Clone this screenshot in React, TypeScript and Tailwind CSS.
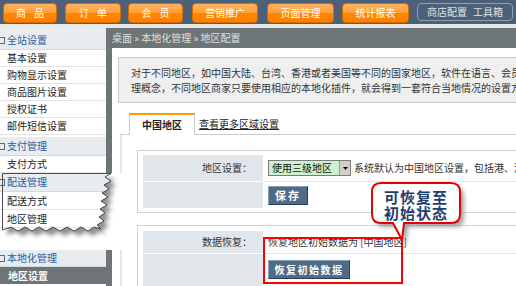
import React from "react";

const PAPER: [number, number][] = [
  [2.5, 0.5], [111, 0.5],
  [105, 4], [111, 8], [104, 12], [109, 16], [102, 20], [108, 24], [101, 28], [107, 32],
  [100, 36], [105, 40], [99, 44], [104, 48], [97, 52], [101, 56],
  [94, 54], [88, 58], [81, 54], [74, 58], [67, 54], [60, 58], [53, 54], [46, 58],
  [39, 54], [32, 58], [25, 54], [18, 58], [11, 54], [2.5, 57],
];
const paperD = "M" + PAPER.map(([x, y]) => `${x} ${y}`).join(" L") + " Z";
const outsideD = "M2 0 H124 V77 H2 Z " + paperD;

const CALLOUT_D =
  "M13 4 H83 Q92 4 92 13 V35 Q92 44 83 44 H36 L34 61 L25 44 H13 Q4 44 4 35 V13 Q4 4 13 4 Z";

function NavBtn({ label, cls, spaced }: { label: string; cls: string; spaced?: boolean }) {
  return (
    <div
      className={`h-[20px] rounded-[4px] border border-[#d96c00] bg-[linear-gradient(to_bottom,#ffb35e_0%,#ff9f38_48%,#ff8700_52%,#ff7f00_100%)] text-white text-[10px] flex items-center justify-center shrink-0 ${cls}`}
    >
      {spaced ? (
        <span className="flex gap-[8px]">
          {label.split("").map((c, i) => (
            <span key={i}>{c}</span>
          ))}
        </span>
      ) : (
        <span>{label}</span>
      )}
    </div>
  );
}

function Header({ label, cls }: { label: string; cls?: string }) {
  return (
    <div className={`flex items-center bg-[#e8ecef] border-b border-[#d5d9dd] text-[#2d5aa0] ${cls ?? ""}`}>
      <span className="w-[7px] h-[7px] border border-[#5d6b7d] -ml-[2px] mr-[2px] shrink-0" />
      <span>{label}</span>
    </div>
  );
}

function Item({ label, cls }: { label: string; cls?: string }) {
  return (
    <div className={`flex items-center pl-[7px] border-b border-[#e3e3e3] bg-white text-[#222] ${cls ?? "h-[17px]"}`}>
      {label}
    </div>
  );
}

function TornSection() {
  return (
    <div className="relative w-[124px] h-[77px] bg-white">
      <Header label="配送管理" cls="h-[19px] w-[124px]" />
      <Item label="配送方式" cls="h-[18px] w-[124px]" />
      <Item label="地区管理" cls="h-[18px] w-[124px]" />
      <svg className="absolute left-0 top-0" width="124" height="77" viewBox="0 0 124 77">
        <defs>
          <filter id="tornblur" x="-20%" y="-20%" width="140%" height="140%">
            <feGaussianBlur stdDeviation="2.2" />
          </filter>
          <clipPath id="tornout">
            <path d={outsideD} clipRule="evenodd" />
          </clipPath>
        </defs>
        <path d={outsideD} fill="#ffffff" fillRule="evenodd" />
        <g clipPath="url(#tornout)">
          <path d={paperD} transform="translate(5,5)" fill="#6a6a6a" opacity="0.75" filter="url(#tornblur)" />
        </g>
        <path d={paperD} fill="none" stroke="#3a3a3a" strokeWidth="0.9" />
      </svg>
    </div>
  );
}

function Sidebar() {
  return (
    <div className="relative z-10 w-[106px] shrink-0 bg-white flex flex-col">
      <div className="bg-[#e8ecef] pt-[3px]">
        <Header label="全站设置" cls="h-[19px]" />
      </div>
      <Item label="基本设置" />
      <Item label="购物显示设置" />
      <Item label="商品图片设置" />
      <Item label="授权证书" />
      <Item label="邮件短信设置" />
      <Header label="支付管理" cls="h-[19px] mt-[2px]" />
      <Item label="支付方式" />
      <TornSection />
      <Header label="本地化管理" cls="h-[17px]" />
      <div className="h-[17px] flex items-center pl-[8px] bg-[#6d7576] text-white font-bold">地区设置</div>
    </div>
  );
}

function Main() {
  return (
    <div className="flex-1 min-w-0 flex flex-col border-l-[6px] border-[#6d7576]">
      <div className="h-[20px] shrink-0 bg-[#6d7576] text-[#dfe2e2] flex items-center whitespace-nowrap">
        桌面 » 本地化管理 » 地区配置
      </div>
      <div className="flex-1 bg-white pl-[6px] overflow-hidden">
        <div className="mt-[9px] w-[420px] h-[46px] border border-[#c8c8c8] bg-[#efefef] px-[12px] pt-[7px] leading-[15px] text-[#333] whitespace-nowrap overflow-hidden">
          <div>对于不同地区，如中国大陆、台湾、香港或者美国等不同的国家地区，软件在语言、会员注册、货币等方面都有不同的管</div>
          <div>理概念，不同地区商家只要使用相应的本地化插件，就会得到一套符合当地情况的设置方案。</div>
        </div>
        <div className="mt-[10px] ml-[2px] w-[420px] h-[22px] flex items-end border-b border-[#cccccc]">
          <div className="w-[9px]" />
          <div className="w-[66px] h-[22px] -mb-px bg-white border-t-2 border-t-[#ff9900] border-x border-x-[#cccccc] font-bold text-[#222] flex items-center justify-center">
            中国地区
          </div>
          <div className="ml-[4px] h-[21px] flex items-center underline text-[#222] whitespace-nowrap">查看更多区域设置</div>
        </div>
        <div className="ml-[2px] h-[200px] border-l-2 border-[#e6e6e6] pl-[15px] pt-[15px]">
          <div className="w-[400px] border border-[#d2d2d2] pt-[4px] px-[5px] pb-[4px]">
            <div className="flex h-[27px]">
              <div className="w-[120px] bg-[#e1e6eb] border-b border-white flex items-center justify-end pr-[11px] text-[#333]">地区设置：</div>
              <div className="flex-1 flex items-center pl-[5px] border-b border-[#e6e6e6] whitespace-nowrap text-[#333] overflow-hidden">
                <div className="h-[16px] w-[83px] shrink-0 flex border border-[#7b7b7b] bg-[#cdf1cd]">
                  <div className="flex-1 flex items-center pl-[3px] text-[#111]">使用三级地区</div>
                  <div className="w-[11px] bg-[#d4d0c8] border-l border-[#9a9a9a] flex items-center justify-center">
                    <svg width="5" height="3" viewBox="0 0 5 3"><path d="M0 0 H5 L2.5 3 Z" fill="#000" /></svg>
                  </div>
                </div>
                <span className="ml-[3px]">系统默认为中国地区设置，包括港、澳、台地区</span>
              </div>
            </div>
            <div className="flex h-[26px]">
              <div className="w-[120px] bg-[#e1e6eb]" />
              <div className="flex-1 flex items-center pl-[5px]">
                <div className="w-[40px] h-[19px] bg-[#506b88] border border-[#2b3e53] border-t-[#8a9db2] border-l-[#8a9db2] text-white font-bold text-[11px] tracking-[2px] flex items-center justify-center">
                  保存
                </div>
              </div>
            </div>
          </div>
          <div className="mt-[12px] w-[400px] h-[80px] border border-[#d2d2d2] pt-[5px] px-[5px]">
            <div className="flex h-[23px]">
              <div className="w-[120px] bg-[#e1e6eb] border-b border-white flex items-center justify-end pr-[11px] text-[#333]">数据恢复：</div>
              <div className="flex-1 flex items-center pl-[5px] border-b border-[#e6e6e6] whitespace-nowrap text-[#333]">
                恢复地区初始数据为 [中国地区]
              </div>
            </div>
            <div className="flex h-[40px]">
              <div className="w-[120px] bg-[#e1e6eb]" />
              <div className="flex-1 pl-[5px] pt-[6px]">
                <div className="w-[82px] h-[19px] bg-[#506b88] border border-[#2b3e53] border-t-[#8a9db2] border-l-[#8a9db2] text-white font-bold text-[10px] tracking-[1.5px] flex items-center justify-center">
                  恢复初始数据
                </div>
              </div>
            </div>
          </div>
        </div>
      </div>
    </div>
  );
}

export default function App() {
  return (
    <div className="relative w-[516px] h-[286px] overflow-hidden bg-white text-[10px] leading-none text-[#222] font-['Noto_Sans_CJK_SC','Noto_Sans',sans-serif]">
      <div className="h-[24px] bg-[#4c6178] flex items-start pt-[3px]">
        <NavBtn label="商品" cls="w-[54px] ml-[3px]" spaced />
        <NavBtn label="订单" cls="w-[56px] ml-[8px]" spaced />
        <NavBtn label="会员" cls="w-[55px] ml-[7px]" spaced />
        <NavBtn label="营销推广" cls="w-[66px] ml-[9px]" />
        <NavBtn label="页面管理" cls="w-[67px] ml-[9px]" />
        <NavBtn label="统计报表" cls="w-[67px] ml-[8px]" />
        <div className="ml-[8px] w-[96px] h-[18px] rounded-[4px] border border-[#8ea2b7] text-[#dfe6ec] text-[10px] flex items-center justify-center gap-[6px] shrink-0">
          <span>商店配置</span>
          <span>工具箱</span>
        </div>
      </div>
      <div className="h-[4px] bg-[#e8e8e8]" />
      <div className="flex h-[258px]">
        <Sidebar />
        <Main />
      </div>
      <div className="absolute left-[263px] top-[237px] w-[140px] h-[47px] border-2 border-[#ff0000]" />
      <div className="absolute left-[368px] top-[179px] w-[104px] h-[70px]">
        <svg className="absolute left-0 top-0" width="104" height="70" viewBox="0 0 104 70">
          <defs>
            <filter id="cblur" x="-20%" y="-20%" width="140%" height="140%">
              <feGaussianBlur stdDeviation="2" />
            </filter>
          </defs>
          <path d={CALLOUT_D} transform="translate(4,4)" fill="#7d7d7d" opacity="0.7" filter="url(#cblur)" />
          <path d={CALLOUT_D} fill="#ffffff" stroke="#e60000" strokeWidth="2" />
        </svg>
        <div className="absolute left-[4px] top-[10px] w-[88px] flex flex-col items-center font-bold text-[15px] leading-[16px] tracking-[1px] text-[#1f3e6e]">
          <div className="h-[16px]">可恢复至</div>
          <div className="h-[16px]">初始状态</div>
        </div>
      </div>
    </div>
  );
}
